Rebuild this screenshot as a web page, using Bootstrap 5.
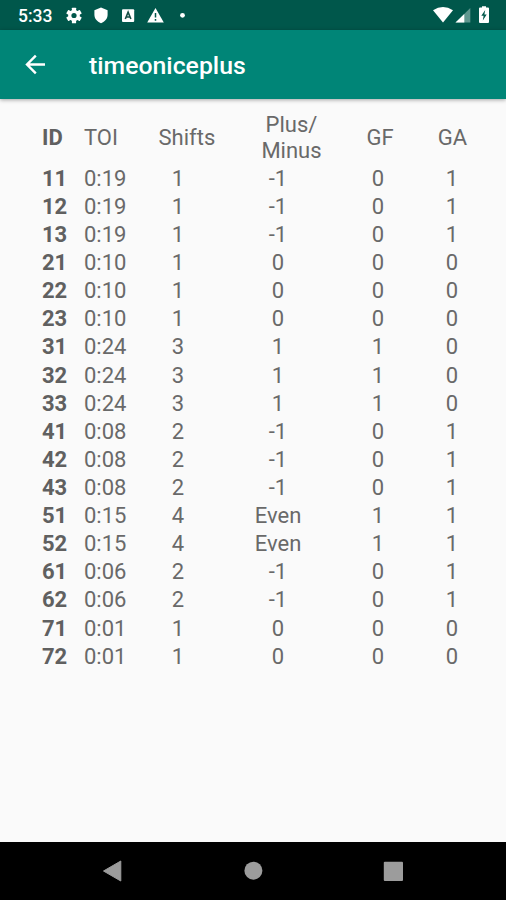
<!DOCTYPE html>
<html lang="en">
<head>
<meta charset="utf-8">
<meta name="viewport" content="width=device-width, initial-scale=1">
<title>timeoniceplus</title>
<link href="https://cdn.jsdelivr.net/npm/bootstrap@5.3.0/dist/css/bootstrap.min.css" rel="stylesheet">
<style>
body { font-family: Roboto, "Liberation Sans", sans-serif; background: #fafafa; color: #696969; overflow: hidden; }
.status-bar { height: 30px; background: #00574b; }
.status-time { font-size: 17.5px; font-weight: 500; line-height: 30px; width: 46px; margin-left: 18px; padding-top: 1px; }
.app-bar { height: 68.5px; background: #008577; box-shadow: 0 1px 4px rgba(0,0,0,.35); }
.app-title { font-size: 24.8px; font-weight: 500; line-height: 30px; padding: 3px 0 0 41px; }
.stats { table-layout: fixed; width: 451px; margin: 13px 0 0 42px; font-size: 22px; line-height: 25.6px; }
.stats th, .stats td { padding: 0; height: 28.12px; }
.stats thead th { height: 53px; font-weight: 400; vertical-align: middle; }
.stats .player, .stats thead .player { font-weight: 700; color: #606060; }
.stats .head-shifts { padding-left: 13.5px; }
.stats .head-plus { padding-left: 27px; }
.stats .head-gf { padding-left: 4px; }
.stats .head-ga { padding-left: 1px; }
.nav-keys { height: 58px; }
svg { display: block; }
</style>
<script src="https://cdn.jsdelivr.net/npm/bootstrap@5.3.0/dist/js/bootstrap.bundle.min.js"></script>
</head>
<body class="vh-100 d-flex flex-column">
<div class="status-bar d-flex flex-shrink-0 justify-content-between text-white">
  <div class="d-flex">
    <span class="status-time text-nowrap">5:33</span>
    <svg width="130" height="30" viewBox="64 0 130 30" fill="#fff" aria-hidden="true">
      <!-- settings gear -->
      <g transform="translate(74 15.5)">
        <rect x="-2.1" y="-7.8" width="4.2" height="15.6" rx=".5"/><rect x="-2.1" y="-7.8" width="4.2" height="15.6" rx=".5" transform="rotate(60)"/><rect x="-2.1" y="-7.8" width="4.2" height="15.6" rx=".5" transform="rotate(120)"/>
        <circle r="5.8"/><circle r="2.6" fill="#00574b"/>
      </g>
      <path d="M101 7.6 107.6 10.2V14.6C107.6 18.7 105 21.8 101 23.2 97 21.8 94.4 18.7 94.4 14.6V10.2Z"/>
      <rect x="122" y="9.3" width="12.2" height="12.6" rx="1"/>
      <path d="M125.3 19 128.1 12.2 130.9 19M126.3 17H130" fill="none" stroke="#174f47" stroke-width="1.6"/>
      <path d="M155.5 8 163.8 22.5H147.2Z"/>
      <path d="M155.5 13V17.5M155.5 19V20.7" stroke="#00574b" stroke-width="1.5"/>
      <circle cx="182.5" cy="15.3" r="2.4"/>
    </svg>
  </div>
  <svg width="76" height="30" viewBox="430 0 76 30" fill="#fff" aria-hidden="true">
    <path d="M433 10.3Q443 3.5 453 10.3L443 22.4Z"/>
    <path d="M470.3 8V22.6H455.5Z" fill="#5f978f"/>
    <path d="M464.3 14V22.6H455.5Z"/>
    <path d="M482 7.5V6.2H486V7.5H488Q489 7.5 489 8.5V22Q489 23 488 23H480Q479 23 479 22V8.5Q479 7.5 480 7.5Z"/>
    <path d="M485.2 10 481.3 15.8H483.6L482.8 20.5 486.7 14.5H484.4Z" fill="#00574b"/>
  </svg>
</div>
<nav class="app-bar d-flex flex-shrink-0 align-items-center text-white">
  <svg class="ms-4" width="24" height="24" viewBox="24 52 24 24" fill="none" stroke="#fff" stroke-width="2.4" role="img" aria-label="Back"><path d="M45 64.5H27.4M35.8 55.7 27 64.5 35.8 73.3"/></svg>
  <span class="app-title">timeoniceplus</span>
</nav>
<main class="flex-grow-1">
  <table class="stats text-center">
    <colgroup><col style="width:42px"><col style="width:61px"><col style="width:66px"><col style="width:134px"><col style="width:66px"><col style="width:82px"></colgroup>
    <thead><tr><th class="player text-start">ID</th><th class="text-start">TOI</th><th class="head-shifts">Shifts</th><th class="head-plus">Plus/<br>Minus</th><th class="head-gf">GF</th><th class="head-ga">GA</th></tr></thead>
    <tbody>
      <tr><td class="player text-start">11</td><td class="text-start">0:19</td><td>1</td><td>-1</td><td>0</td><td>1</td></tr>
      <tr><td class="player text-start">12</td><td class="text-start">0:19</td><td>1</td><td>-1</td><td>0</td><td>1</td></tr>
      <tr><td class="player text-start">13</td><td class="text-start">0:19</td><td>1</td><td>-1</td><td>0</td><td>1</td></tr>
      <tr><td class="player text-start">21</td><td class="text-start">0:10</td><td>1</td><td>0</td><td>0</td><td>0</td></tr>
      <tr><td class="player text-start">22</td><td class="text-start">0:10</td><td>1</td><td>0</td><td>0</td><td>0</td></tr>
      <tr><td class="player text-start">23</td><td class="text-start">0:10</td><td>1</td><td>0</td><td>0</td><td>0</td></tr>
      <tr><td class="player text-start">31</td><td class="text-start">0:24</td><td>3</td><td>1</td><td>1</td><td>0</td></tr>
      <tr><td class="player text-start">32</td><td class="text-start">0:24</td><td>3</td><td>1</td><td>1</td><td>0</td></tr>
      <tr><td class="player text-start">33</td><td class="text-start">0:24</td><td>3</td><td>1</td><td>1</td><td>0</td></tr>
      <tr><td class="player text-start">41</td><td class="text-start">0:08</td><td>2</td><td>-1</td><td>0</td><td>1</td></tr>
      <tr><td class="player text-start">42</td><td class="text-start">0:08</td><td>2</td><td>-1</td><td>0</td><td>1</td></tr>
      <tr><td class="player text-start">43</td><td class="text-start">0:08</td><td>2</td><td>-1</td><td>0</td><td>1</td></tr>
      <tr><td class="player text-start">51</td><td class="text-start">0:15</td><td>4</td><td>Even</td><td>1</td><td>1</td></tr>
      <tr><td class="player text-start">52</td><td class="text-start">0:15</td><td>4</td><td>Even</td><td>1</td><td>1</td></tr>
      <tr><td class="player text-start">61</td><td class="text-start">0:06</td><td>2</td><td>-1</td><td>0</td><td>1</td></tr>
      <tr><td class="player text-start">62</td><td class="text-start">0:06</td><td>2</td><td>-1</td><td>0</td><td>1</td></tr>
      <tr><td class="player text-start">71</td><td class="text-start">0:01</td><td>1</td><td>0</td><td>0</td><td>0</td></tr>
      <tr><td class="player text-start">72</td><td class="text-start">0:01</td><td>1</td><td>0</td><td>0</td><td>0</td></tr>
    </tbody>
  </table>
</main>
<footer class="nav-keys bg-black flex-shrink-0">
  <svg width="506" height="58" viewBox="0 842 506 58" fill="#9c9c9c" aria-hidden="true">
    <path d="M103.5 871 120.8 861V881Z" stroke="#9c9c9c" stroke-linejoin="round"/>
    <circle cx="253.4" cy="870.7" r="9"/>
    <rect x="383.8" y="861.7" width="19.2" height="19.2" rx="1"/>
  </svg>
</footer>
</body>
</html>
